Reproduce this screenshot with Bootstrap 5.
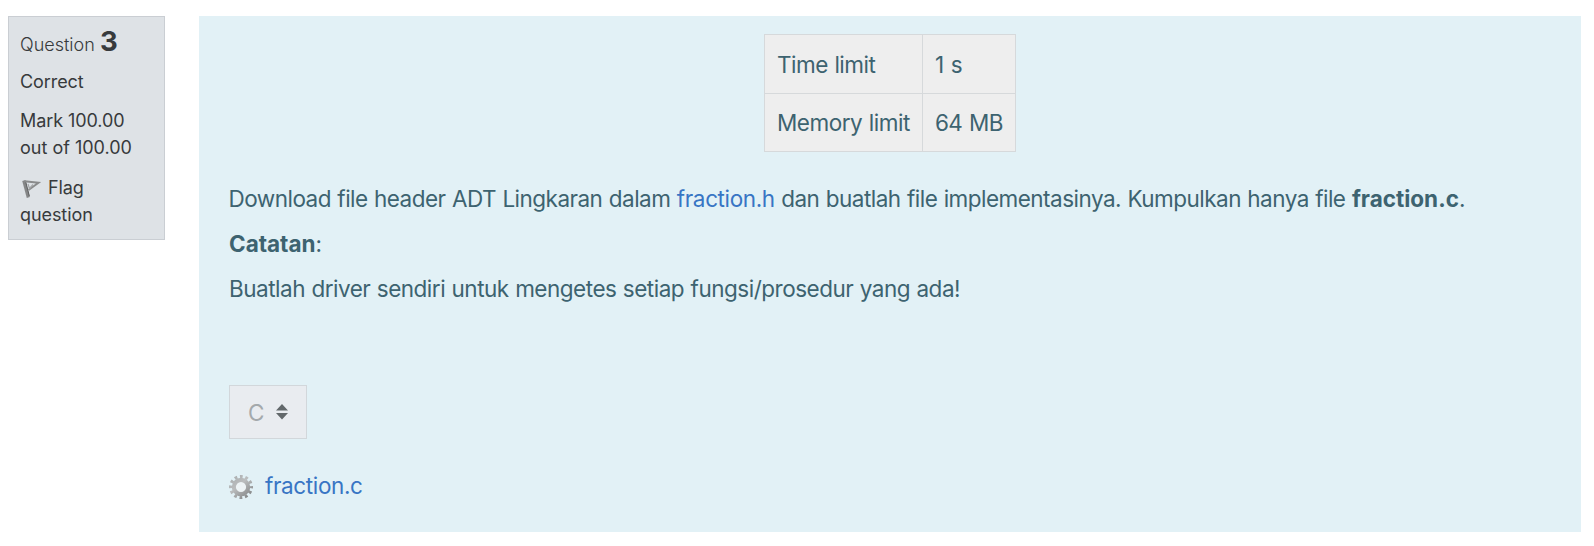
<!DOCTYPE html>
<html lang="id">
<head>
<meta charset="utf-8">
<meta name="viewport" content="width=device-width, initial-scale=1">
<title>Question 3</title>
<link href="https://cdn.jsdelivr.net/npm/bootstrap@5.3.0/dist/css/bootstrap.min.css" rel="stylesheet">
<style>
body{font-family:Inter,"Liberation Sans",sans-serif;font-size:22.5px;line-height:33px;color:#3d6370;background:#fff}
a{color:#3875c4;text-decoration:none;letter-spacing:-.37px}
b{font-weight:700;letter-spacing:0}
.quiz{padding:16px 13px 0 8px;gap:34px}
.info{width:157px;height:224px;border:1px solid #caced3;background:#dee2e6;color:#373a3c;font-size:18px;line-height:27px;padding:11px 11px 0;letter-spacing:-.08px}
.info .qno{font-weight:300;line-height:34px;margin-bottom:6px;letter-spacing:0}
.info .qno b{font-size:27.500px;line-height:1}
.info .state{margin-bottom:12px}
.info .grade{margin-bottom:13px}
.info .total{letter-spacing:0}
.content{height:516px;background:#e2f1f6;padding:18px 30px 0;letter-spacing:-.52px;word-spacing:.6px}
.limits{width:252px;height:118px;border-collapse:collapse;background:#eee;margin:0 auto 30px}
.limits td{border:1px solid #d6d9db;padding:1px 12px 0;white-space:nowrap;height:58.500px;letter-spacing:-.47px}
.limits td:first-child{width:159px}
.limits .secs{letter-spacing:-.1px}
.content p{margin:0 0 12px;white-space:nowrap}
.content p:first-of-type{margin-left:-.5px}
.content p:last-of-type{letter-spacing:-.49px}
.lang{width:78px;height:54px;border:1px solid #d2d7db;background:#e9ecf0;color:#a4a9ac;padding:0 18px;margin:80px 0 30px}
.file{gap:12px}
.gear{margin-top:3px}
</style>
</head>
<body>
<main class="quiz d-flex align-items-start">
  <aside class="info flex-shrink-0">
    <div class="qno">Question <b>3</b></div>
    <div class="state">Correct</div>
    <div class="grade">Mark 100.00<br><span class="total">out of 100.00</span></div>
    <div><svg width="23" height="20" viewBox="0 0 23 20" fill="none"><path d="M3.800 1.500 8.300 18.500" stroke="#858687" stroke-width="3.200"/><path d="M5.500 2 9.300 17" stroke="#5f6061" stroke-width="1"/><path d="M4.500 2.200 18.500 3.800 8.500 11" stroke="#8a8b8c" stroke-width="2"/><path d="M8 5 9.500 9.500 13 5.500" stroke="#a3a5a7" stroke-width="1.200"/></svg> Flag<br>question</div>
  </aside>
  <section class="content flex-grow-1">
    <table class="limits">
      <tr><td>Time limit</td><td class="secs">1 s</td></tr>
      <tr><td>Memory limit</td><td>64 MB</td></tr>
    </table>
    <p>Download file header ADT Lingkaran dalam <a href="#">fraction.h</a> dan buatlah file implementasinya. Kumpulkan hanya file <b>fraction.c</b>.</p>
    <p><b>Catatan</b>:</p>
    <p>Buatlah driver sendiri untuk mengetes setiap fungsi/prosedur yang ada!</p>
    <div class="lang d-flex align-items-center justify-content-between"><span>C</span>
      <svg width="12" height="16" viewBox="0 0 12 16" fill="#62686b"><path d="M0 6.500 6 0l6 6.500zM0 9h12l-6 6.500z"/></svg></div>
    <div class="file d-flex align-items-center">
      <svg class="gear" width="24" height="24" viewBox="-12.200 -12.200 24.400 24.400" fill="none">
        <defs><linearGradient id="steel" gradientUnits="userSpaceOnUse" x1="-8" y1="-10" x2="8" y2="10"><stop offset="0" stop-color="#adb0b1"/><stop offset=".4" stop-color="#bbbdbe"/><stop offset="1" stop-color="#858788"/></linearGradient></defs>
        <circle r="10.500" stroke="url(#steel)" stroke-width="3.400" stroke-dasharray="2.800 2.698" stroke-dashoffset="1.400"/>
        <circle r="7.300" fill="#edf3f5" stroke="url(#steel)" stroke-width="4.200"/>
      </svg>
      <a href="#">fraction.c</a></div>
  </section>
</main>
<script src="https://cdn.jsdelivr.net/npm/bootstrap@5.3.0/dist/js/bootstrap.bundle.min.js"></script>
</body>
</html>
